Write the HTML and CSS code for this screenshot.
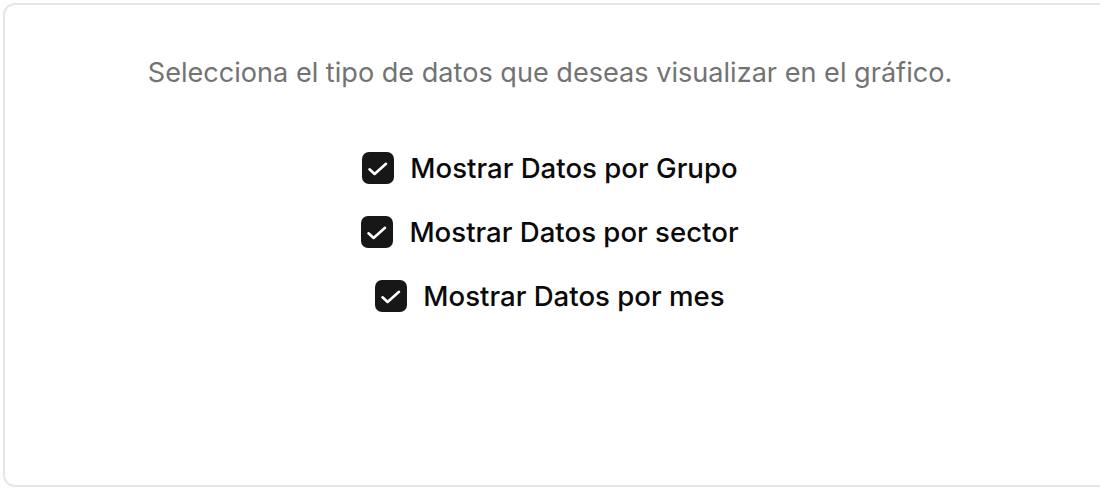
FILE: index.html
```html
<!DOCTYPE html>
<html lang="es">
<head>
<meta charset="utf-8">
<link rel="stylesheet" href="styles.css">
</head>
<body>
<div class="card">
  <div class="content">
    <p class="intro">Selecciona el tipo de datos que deseas visualizar en el gráfico.</p>
    <div class="options">
      <label class="option">
        <span class="box"><svg viewBox="0 0 32 32" width="32" height="32"><path d="M7.5 17.3 L12.6 22 L24 11.8" fill="none" stroke="#fff" stroke-width="2.6" stroke-linecap="round" stroke-linejoin="round"/></svg></span>
        <span class="text">Mostrar Datos por Grupo</span>
      </label>
      <label class="option">
        <span class="box"><svg viewBox="0 0 32 32" width="32" height="32"><path d="M7.5 17.3 L12.6 22 L24 11.8" fill="none" stroke="#fff" stroke-width="2.6" stroke-linecap="round" stroke-linejoin="round"/></svg></span>
        <span class="text">Mostrar Datos por sector</span>
      </label>
      <label class="option">
        <span class="box"><svg viewBox="0 0 32 32" width="32" height="32"><path d="M7.5 17.3 L12.6 22 L24 11.8" fill="none" stroke="#fff" stroke-width="2.6" stroke-linecap="round" stroke-linejoin="round"/></svg></span>
        <span class="text">Mostrar Datos por mes</span>
      </label>
    </div>
  </div>
</div>
</body>
</html>
```

FILE: styles.css
```css
html, body {
  margin: 0;
  padding: 0;
  background: #ffffff;
  overflow: hidden;
}
body {
  font-family: Inter, "Noto Sans", "Liberation Sans", sans-serif;
  padding: 3px 0 0 3px;
  width: 1100px;
  height: 488px;
  box-sizing: border-box;
}
.card {
  width: 1130px;
  height: 484px;
  box-sizing: border-box;
  border: 2px solid #e6e6e6;
  border-radius: 12px;
  background: #fff;
}
.content {
  width: 1090px;
  padding-top: 50px;
  display: flex;
  flex-direction: column;
  align-items: center;
}
.intro {
  margin: 0;
  font-size: 27.1px;
  line-height: 36px;
  color: #737373;
  font-weight: 400;
}
.options {
  margin-top: 61px;
  display: flex;
  flex-direction: column;
  align-items: center;
  gap: 32px;
}
.option {
  display: flex;
  align-items: center;
  gap: 16px;
  height: 32px;
}
.box {
  width: 32px;
  height: 32px;
  border-radius: 7px;
  background: #171717;
  display: block;
}
.box svg {
  display: block;
}
.text {
  font-size: 27.6px;
  font-weight: 500;
  color: #0a0a0a;
  line-height: 32px;
}
```
